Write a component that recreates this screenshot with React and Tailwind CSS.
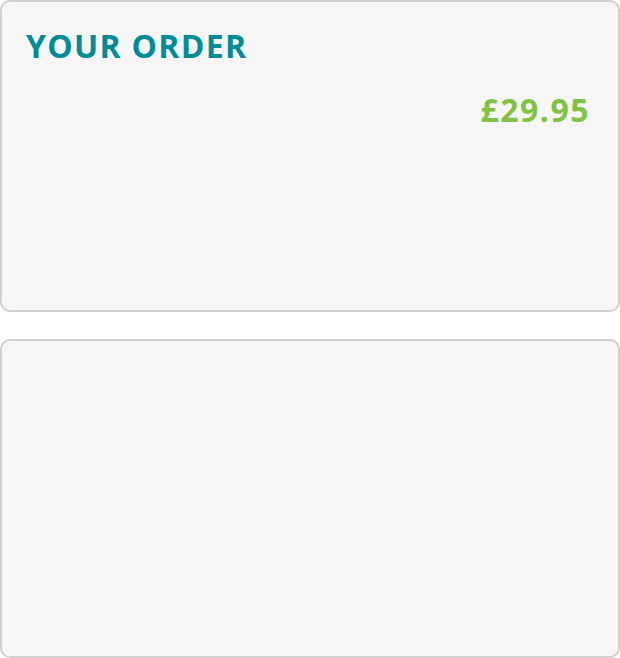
export default function App() {
  return (
    <div
      className="w-[620px] h-[658px] bg-white flex flex-col gap-[27px]"
      style={{ fontFamily: '"Open Sans", "Noto Sans", sans-serif' }}
    >
      <div className="h-[312px] rounded-[10px] border-2 border-[#d0d0d0] bg-[#f6f6f6] px-[24px] pt-[22px]">
        <h2 className="text-[32px] leading-[44px] font-bold tracking-[1.3px] text-[#008b98]">
          YOUR ORDER
        </h2>
        <div className="flex justify-end pr-[4px] mt-[22px]">
          <span className="text-[32px] leading-[40px] font-bold tracking-[1.5px] text-[#80c242]">
            £29.95
          </span>
        </div>
      </div>
      <div className="h-[319px] rounded-[10px] border-2 border-[#d0d0d0] bg-[#f6f6f6]"></div>
    </div>
  );
}
